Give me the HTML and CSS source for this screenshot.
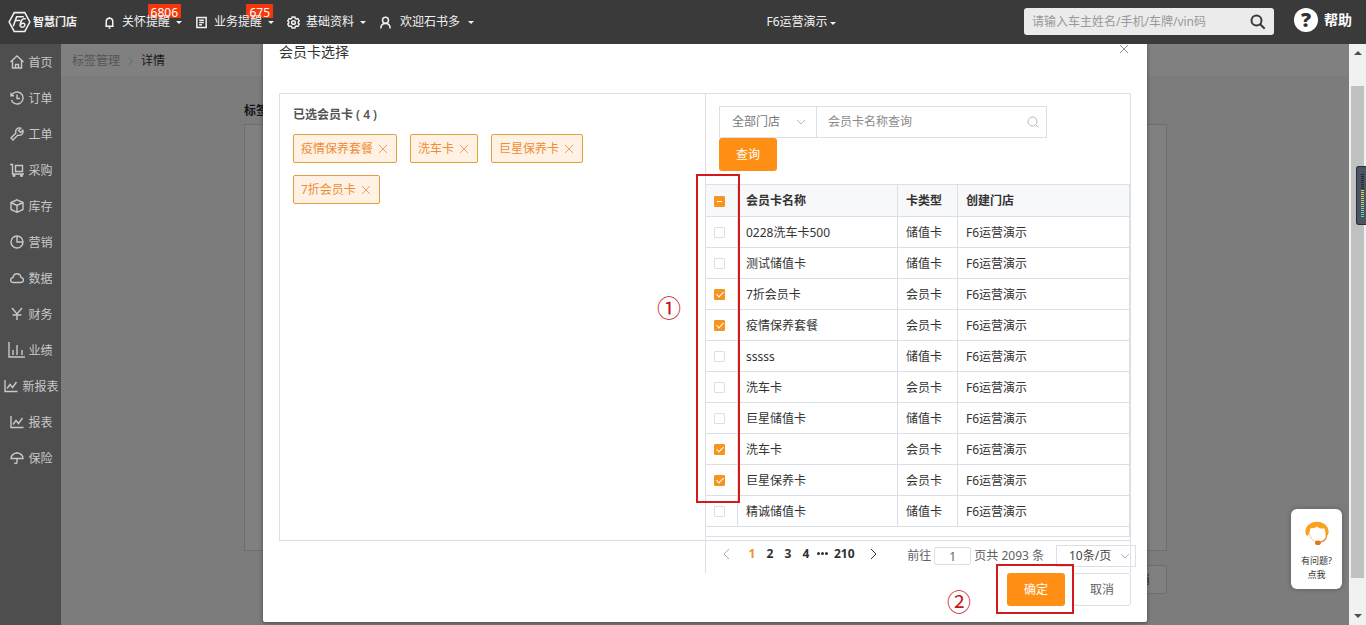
FILE: index.html
```html
<!DOCTYPE html>
<html lang="zh-CN">
<head>
<meta charset="utf-8">
<title>智慧门店</title>
<link rel="stylesheet" href="styles.css">
</head>
<body>
<div class="app">
  <header class="topbar">
    <div class="logo">
      <svg class="logo-mark" viewBox="0 0 24 22" fill="none" stroke="currentColor" stroke-width="1.6"><path d="M6.500 1.200h11L22.800 11l-5.300 9.800h-11L1.200 11z"/><path d="M5.500 15.500L9 5.500h7.500M8 9.500h5M18.500 7.500h-2c-2 0-3 3-3.800 6-.7 3.500 4 4 4.800 1 .600-2.600-2.800-3-4.200-.8"/></svg>
      <strong class="logo-text">智慧门店</strong>
    </div>
    <nav class="topnav">
      <button class="nav-item" type="button"><svg class="nav-icon" viewBox="0 0 14 14"><path d="M3.500 11V6a3.500 3.500 0 0 1 7 0v5M2.500 11h9M6 13h2M7 1v1.500"/></svg><span class="nav-label">关怀提醒<span class="badge">6806</span></span><i class="caret"></i></button>
      <button class="nav-item" type="button"><svg class="nav-icon" viewBox="0 0 14 14"><path d="M2 1.500h10v11H2zM4.500 4.500h5M4.500 7h5M4.500 9.500h3"/></svg><span class="nav-label">业务提醒<span class="badge">675</span></span><i class="caret"></i></button>
      <button class="nav-item" type="button"><svg class="nav-icon" viewBox="0 0 14 14"><path d="M5.500 1h3l.5 1.600 1 .600 1.700-.400 1.500 2.500L12 6.500v1l1.200 1.200-1.500 2.500-1.700-.400-1 .600-.5 1.600h-3L5 11.400l-1-.600-1.700.400L.8 8.700 2 7.500v-1L.8 5.300l1.500-2.500 1.700.400 1-.600z"/><circle cx="7" cy="7" r="2"/></svg><span class="nav-label">基础资料</span><i class="caret"></i></button>
      <button class="nav-item nav-user" type="button"><svg class="nav-icon" viewBox="0 0 14 14"><circle cx="7" cy="4.500" r="3.200"/><path d="M2 13.500c0-3.500 2-5.500 5-5.500s5 2 5 5.500"/></svg><span class="nav-label">欢迎石书多</span><i class="caret"></i></button>
    </nav>
    <button class="shop-switch" type="button">F6运营演示<i class="caret"></i></button>
    <div class="topbar-right">
      <label class="search"><input type="text" aria-label="搜索" placeholder="请输入车主姓名/手机/车牌/vin码"><svg class="search-icon" viewBox="0 0 16 16"><circle cx="6.500" cy="6.500" r="5"/><path d="M10.200 10.200l4.500 4.500"/></svg></label>
      <a class="help" href="#"><span class="help-mark">?</span>帮助</a>
    </div>
  </header>

  <div class="workspace">
    <nav class="sidebar">
      <a href="#"><svg viewBox="0 0 14 14"><path d="M.5 7L7 1l6.500 6M2.500 5.500V13h9V5.500M5.500 13V9.500h3V13"/></svg>首页</a>
      <a href="#"><svg viewBox="0 0 14 14"><path d="M1.600 4.500A6 6 0 1 1 1.400 9M1 1.800v3h3M7 3.500V7.500h3"/></svg>订单</a>
      <a href="#"><svg viewBox="0 0 14 14"><path d="M12.800 3.200l-2.300 2.300-2-2 2.300-2.300a3.800 3.800 0 0 0-4.900 4.900L1 11l2 2 4.900-4.900a3.800 3.800 0 0 0 4.900-4.900z"/></svg>工单</a>
      <a href="#"><svg viewBox="0 0 14 14"><path d="M0 1.500h2.500V11H14M5.500 2.500h7v6h-7z"/><circle cx="4" cy="12.500" r=".8"/><circle cx="11.500" cy="12.500" r=".8"/></svg>采购</a>
      <a href="#"><svg viewBox="0 0 14 14"><path d="M7 .8l6 2.700v7L7 13.300 1 10.500v-7zM1 3.500L7 6.500l6-3M7 6.500v6.800"/></svg>库存</a>
      <a href="#"><svg viewBox="0 0 14 14"><circle cx="7" cy="7" r="6"/><path d="M7 1v6h6"/></svg>营销</a>
      <a href="#"><svg viewBox="0 0 14 14"><path d="M3.500 11.500C-.3 11.500-.3 7 3 6.500 4 1.500 10 1.500 11 6.500c3.400.5 3.400 5-.5 5z"/></svg>数据</a>
      <a href="#"><svg viewBox="0 0 14 14"><path d="M2 1l5 6 5-6M2.500 8h9M7 7v6"/></svg>财务</a>
      <a class="perf" href="#"><svg class="wide" viewBox="0 0 17 16"><path d="M1 0v15h16M5 13V8M9 13V3M14 13V8"/></svg>业绩</a>
      <a href="#"><svg viewBox="0 0 14 14"><path d="M1 1v11.500h12.500M3 9.500l3-4 2.500 3L12.500 3"/></svg>新报表</a>
      <a href="#"><svg viewBox="0 0 14 14"><path d="M1 1v11.500h12.500M3 9.500l3-4 2.500 3L12.500 3"/></svg>报表</a>
      <a href="#"><svg viewBox="0 0 14 14"><path d="M1 7.500a6 5.500 0 0 1 12 0zM7 1v1M7 7.500v4c0 1.500-2.500 1.500-2.500 0"/></svg>保险</a>
    </nav>

    <main class="page">
      <div class="crumbs"><a href="#">标签管理</a><svg viewBox="0 0 8 12"><path d="M2 2l4 4-4 4"/></svg><span>详情</span></div>
      <div class="detail">
        <h2>标签</h2>
        <div class="detail-card"></div>
        <div class="detail-actions"><button type="button">取消</button></div>
      </div>

      <section class="modal" role="dialog" aria-labelledby="dialog-title">
        <div class="modal-head">
          <h1 id="dialog-title">会员卡选择</h1>
          <button class="close" type="button" aria-label="关闭"><svg viewBox="0 0 10 10"><path d="M1 1l8 8M9 1L1 9"/></svg></button>
        </div>
        <div class="picker">
          <div class="chosen">
            <h3>已选会员卡 ( 4 )</h3>
            <div class="tags">
              <span class="tag">疫情保养套餐<button type="button" aria-label="移除"><svg viewBox="0 0 10 10"><path d="M1 1l8 8M9 1L1 9"/></svg></button></span>
              <span class="tag">洗车卡<button type="button" aria-label="移除"><svg viewBox="0 0 10 10"><path d="M1 1l8 8M9 1L1 9"/></svg></button></span>
              <span class="tag">巨星保养卡<button type="button" aria-label="移除"><svg viewBox="0 0 10 10"><path d="M1 1l8 8M9 1L1 9"/></svg></button></span>
              <span class="tag">7折会员卡<button type="button" aria-label="移除"><svg viewBox="0 0 10 10"><path d="M1 1l8 8M9 1L1 9"/></svg></button></span>
            </div>
          </div>
          <div class="cards">
            <form class="filter">
              <div class="filter-row">
                <label class="select-box store"><select aria-label="门店"><option>全部门店</option></select><svg class="chevron" viewBox="0 0 10 6"><path d="M1 1l4 4 4-4"/></svg></label>
                <label class="query"><input type="text" aria-label="会员卡名称" placeholder="会员卡名称查询"><svg viewBox="0 0 12 12"><circle cx="5.500" cy="5.500" r="4.500"/><path d="M9 9l2.500 2.500"/></svg></label>
              </div>
              <button class="primary" type="button">查询</button>
            </form>
            <div class="table-wrap">
              <table>
                <colgroup><col class="c-check"><col class="c-name"><col class="c-type"><col></colgroup>
                <thead><tr><th><input class="partial" type="checkbox" aria-label="全选"></th><th>会员卡名称</th><th>卡类型</th><th>创建门店</th></tr></thead>
                <tbody>
                  <tr><td><input type="checkbox" aria-label="选择"></td><td>0228洗车卡500</td><td>储值卡</td><td>F6运营演示</td></tr>
                  <tr><td><input type="checkbox" aria-label="选择"></td><td>测试储值卡</td><td>储值卡</td><td>F6运营演示</td></tr>
                  <tr><td><input type="checkbox" aria-label="选择" checked></td><td>7折会员卡</td><td>会员卡</td><td>F6运营演示</td></tr>
                  <tr><td><input type="checkbox" aria-label="选择" checked></td><td>疫情保养套餐</td><td>会员卡</td><td>F6运营演示</td></tr>
                  <tr><td><input type="checkbox" aria-label="选择"></td><td>sssss</td><td>储值卡</td><td>F6运营演示</td></tr>
                  <tr><td><input type="checkbox" aria-label="选择"></td><td>洗车卡</td><td>会员卡</td><td>F6运营演示</td></tr>
                  <tr><td><input type="checkbox" aria-label="选择"></td><td>巨星储值卡</td><td>储值卡</td><td>F6运营演示</td></tr>
                  <tr><td><input type="checkbox" aria-label="选择" checked></td><td>洗车卡</td><td>会员卡</td><td>F6运营演示</td></tr>
                  <tr><td><input type="checkbox" aria-label="选择" checked></td><td>巨星保养卡</td><td>会员卡</td><td>F6运营演示</td></tr>
                  <tr><td><input type="checkbox" aria-label="选择"></td><td>精诚储值卡</td><td>储值卡</td><td>F6运营演示</td></tr>
                </tbody>
              </table>
            </div>
            <div class="pager">
              <div class="pages">
                <button class="prev" type="button" aria-label="上一页"><svg viewBox="0 0 8 12"><path d="M6 1L1 6l5 5"/></svg></button>
                <button class="current" type="button">1</button><button type="button">2</button><button type="button">3</button><button type="button">4</button><span class="dots"><i></i><i></i><i></i></span><button class="last" type="button">210</button>
                <button class="next" type="button" aria-label="下一页"><svg viewBox="0 0 8 12"><path d="M2 1l5 5-5 5"/></svg></button>
              </div>
              <label class="jump">前往<input type="text" value="1">页共 2093 条</label>
              <label class="select-box size"><select aria-label="每页条数"><option>10条/页</option></select><svg class="chevron" viewBox="0 0 10 6"><path d="M1 1l4 4 4-4"/></svg></label>
            </div>
          </div>
        </div>
        <div class="modal-foot">
          <button class="primary" type="button">确定</button>
          <button class="plain" type="button">取消</button>
        </div>
        <div class="mark mark-checks"></div>
        <div class="mark mark-confirm"></div>
        <span class="step step-one">①</span>
        <span class="step step-two">②</span>
      </section>

      <a class="service" href="#">
        <svg viewBox="0 0 28 28"><path d="M3 17C-1 12 3 2 14 2s15 10 11 15c-2 0-2-5-3-8-4 1-7-1-8-2-2 2-5 2-7 2-1 3-1 8-4 8z" fill="#f9a11f"/><path d="M24 15c1 5-2 8-7 9" fill="none" stroke="#f0902a" stroke-width="1.500"/><path d="M6 15c1 5 3 7 7 8" fill="none" stroke="#f9c27a"/><ellipse cx="15" cy="24.500" rx="3.200" ry="2.500" fill="#e8731c"/></svg>
        <span>有问题?</span><span>点我</span>
      </a>
    </main>

    <div class="scroller" aria-hidden="true"><i class="arrow-up"></i><div class="thumb"></div><i class="arrow-down"></i>
      <div class="meter"><div class="meter-bars"></div></div>
    </div>
  </div>
</div>
</body>
</html>
```

FILE: styles.css
```css
* { box-sizing: border-box; }
body { margin: 0; font: 12px/16px "Noto Sans", "Noto Sans CJK SC", sans-serif; color: #333; }
button, input, select { font: inherit; color: inherit; margin: 0; padding: 0; border: 0; background: none; outline: 0; }
a { color: inherit; text-decoration: none; }
h1, h2, h3 { margin: 0; font-size: 12px; }
svg { flex: none; fill: none; stroke: currentColor; }

.app { height: 100vh; display: flex; flex-direction: column; overflow: hidden; }

.topbar { flex: none; height: 44px; display: flex; align-items: center; padding: 0 14px 0 8px; background: #3a3a3a; color: #f2f2f2; position: relative; }
.logo { display: flex; align-items: center; gap: 2px; }
.logo-mark { width: 23px; height: 22px; }
.logo-text { font-size: 11px; }
.topnav { display: flex; gap: 13px; margin-left: 26px; }
.nav-item { display: flex; align-items: center; gap: 6px; }
.nav-user { gap: 8px; }
.nav-icon { width: 13px; height: 13px; stroke-width: 1.6; }
.nav-label { position: relative; z-index: 0; }
.badge { position: absolute; right: -11px; top: -10px; height: 14px; padding: 0 3px; border-radius: 1px; background: #f5380c; color: #fff; line-height: 17px; z-index: -1; }
.caret { display: inline-block; border: 3px solid transparent; border-top-color: currentColor; border-bottom: 0; }
.shop-switch { position: absolute; left: 0; right: 0; width: fit-content; margin: 0 auto; padding-left: 236px; display: flex; align-items: center; gap: 2px; }
.shop-switch .caret { margin-top: 3px; }
.topbar-right { margin-left: auto; display: flex; align-items: center; gap: 20px; margin-bottom: 4px; }
.search { width: 250px; height: 27px; margin-top: 3px; display: flex; align-items: center; padding: 0 8px; border-radius: 3px; background: #ebebeb; color: #3a3a3a; }
.search input { flex: 1; min-width: 0; }
.search input::placeholder { color: #999; }
.search-icon { width: 16px; height: 16px; stroke-width: 2; }
.help { display: flex; align-items: center; gap: 6px; font-size: 14px; font-weight: bold; color: #fff; }
.help-mark { width: 24px; height: 24px; border-radius: 50%; background: #fff; color: #333; font-size: 20px; font-weight: 900; line-height: 24px; text-align: center; }

.workspace { flex: 1; min-height: 0; display: flex; }
.sidebar { flex: none; width: 61px; background: #4e4e4e; color: #c8c8c8; padding: 1px 0 0 2px; }
.sidebar a { height: 36px; display: flex; align-items: center; justify-content: center; gap: 4px; white-space: nowrap; }
.sidebar svg { width: 14px; height: 14px; stroke-width: 1.4; margin-bottom: 2px; }
.sidebar .wide { width: 17px; height: 16px; }
.sidebar .perf { gap: 3px; padding-right: 2px; }

.page { flex: 1; min-width: 0; position: relative; background: #7c7c7c; overflow: hidden; }
.crumbs { height: 33px; display: flex; align-items: center; gap: 6px; padding: 2px 11px 0; background: #808080; border-bottom: 1px solid #7a7a7a; color: #555; }
.crumbs svg { width: 9px; height: 12px; stroke: #60696f; }
.crumbs span { color: #151515; }
.detail { width: 924px; max-width: 100%; margin: 26px auto 0; padding-left: 1px; }
.detail h2 { color: #151515; }
.detail-card { height: 427px; margin-top: 5px; border: 1px solid #6e6e6e; background: #808080; }
.detail-actions { display: flex; justify-content: flex-end; margin-top: 14px; }
.detail-actions button { width: 58px; height: 29px; border: 1px solid #6e6e6e; border-radius: 3px; background: #808080; color: #333; }

.modal { position: absolute; top: 0; left: 0; right: 0; width: 884px; max-width: 100%; margin: 0 auto; padding: 0 16px 16px; background: #fff; border-radius: 0 0 2px 2px; box-shadow: 0 1px 4px #0006; }
.modal-head { height: 49px; display: flex; align-items: flex-start; justify-content: space-between; }
.modal-head h1 { font-size: 14px; line-height: 16px; font-weight: normal; }
.close { width: 12px; height: 10px; display: flex; color: #909399; }
.close svg, .tag svg { width: 10px; height: 10px; }

.picker { display: grid; grid-template-columns: 1fr 1fr; height: 448px; border: 1px solid #dcdfe6; }
.chosen { padding: 13px; }
.chosen h3 { color: #555; font-weight: 600; line-height: 16px; }
.tags { display: flex; flex-wrap: wrap; gap: 12px 13px; margin-top: 11px; max-width: 320px; }
.tag { height: 29px; display: flex; align-items: center; gap: 5px; padding: 0 8px 0 7px; border: 1px solid #dca23e; border-radius: 2px; background: #fff2e5; color: #ee8d35; }
.tag button { display: flex; color: #eda06a; }

.cards { height: 479px; border-left: 1px solid #dcdfe6; border-right: 1px solid #dcdfe6; margin-right: -1px; display: flex; flex-direction: column; }
.filter { padding: 12px 13px 13px; }
.filter-row { display: flex; width: 328px; max-width: 100%; }
.select-box { position: relative; display: flex; align-items: center; border: 1px solid #dcdfe6; }
.select-box select { appearance: none; width: 100%; height: 100%; padding-left: 12px; }
.chevron { position: absolute; right: 10px; width: 10px; height: 6px; stroke: #b4b8bf; }
.store { width: 98px; height: 32px; color: #777; }
.query { flex: 1; height: 32px; display: flex; align-items: center; padding: 0 7px 0 11px; border: 1px solid #dcdfe6; border-left: 0; }
.query input { flex: 1; min-width: 0; }
.query input::placeholder { color: #8b8b8b; }
.query svg { width: 12px; height: 12px; stroke: #b4b8bf; }
.primary { display: block; width: 58px; height: 33px; border-radius: 3px; background: #ff9015; color: #fff; }

.table-wrap { border: 1px solid #dcdfe6; border-left: 0; padding-bottom: 9px; }
table { width: 100%; table-layout: fixed; border-collapse: separate; border-spacing: 0; }
.c-check { width: 32px; }
.c-name { width: 160px; }
.c-type { width: 60px; }
th, td { height: 31px; padding: 1px 8px 0; border: 0 solid #dcdfe6; border-width: 0 1px 1px 0; text-align: left; white-space: nowrap; }
th { height: 32px; background: #f7f8fa; font-weight: bold; }
th:last-child, td:last-child { border-right: 0; }
table input { appearance: none; display: block; position: relative; width: 11px; height: 11px; border: 1px solid #dcdfe6; border-radius: 1px; background: #fff; }
table input:checked, table .partial { border-color: #f7941d; background: #f7941d; }
table input:checked::after { content: ""; position: absolute; left: 3px; top: 0; width: 3px; height: 6px; border: solid #fff; border-width: 0 1px 1px 0; transform: rotate(45deg); }
table .partial::after { content: ""; position: absolute; left: 2px; top: 4px; width: 5px; height: 1px; background: #fff; }

.pager { display: flex; align-items: center; margin: 8px -6px 0 17px; white-space: nowrap; color: #606266; }
.pages { display: flex; align-items: center; font-weight: bold; color: #303133; margin-bottom: 5px; }
.pages button { min-width: 18px; text-align: center; }
.pages .current { color: #ee9228; }
.pages svg { display: block; width: 8px; height: 12px; }
.pages .prev { color: #aaa; padding-right: 12px; }
.pages .next { padding-left: 14px; }
.pages .last { padding: 0 0 0 4px; }
.dots { display: flex; gap: 1px; padding: 0 2px; }
.dots i { width: 3px; height: 3px; border-radius: 50%; background: #303133; }
.jump { display: flex; align-items: center; gap: 3px; margin-left: auto; }
.jump input { width: 37px; height: 18px; border: 1px solid #dcdfe6; border-radius: 2px; text-align: center; }
.size { width: 80px; height: 22px; margin-left: 12px; color: #444; }
.size .chevron { right: 5px; }

.modal-foot { display: flex; justify-content: flex-end; gap: 8px; margin-top: 32px; }
.plain { width: 58px; height: 33px; border: 1px solid #dcdfe6; border-radius: 3px; color: #606266; }

.mark { position: absolute; border: 2px solid #d3191c; pointer-events: none; }
.mark-checks { left: 433px; top: 130px; width: 44px; height: 329px; }
.mark-confirm { right: 73px; bottom: 8px; width: 78px; height: 50px; }
.step { position: absolute; font-size: 24px; line-height: 24px; color: #c9161d; }
.step-one { left: 394px; top: 252px; }
.step-two { right: 176px; bottom: 8px; }

.service { position: absolute; right: 7px; bottom: 36px; width: 51px; height: 80px; padding-top: 11px; display: flex; flex-direction: column; align-items: center; border-radius: 6px; background: #fff; box-shadow: 0 0 5px #0004; font-size: 9px; line-height: 14px; }
.service svg { width: 26px; height: 26px; margin-bottom: 8px; stroke: none; }

.scroller { position: relative; flex: none; width: 17px; padding: 7px 2px; display: flex; flex-direction: column; align-items: center; background: #f1f1f1; }
.thumb { width: 13px; flex: 1; margin: 31px 0 36px; background: #c1c1c1; }
.arrow-up, .arrow-down { border: 4px solid transparent; }
.arrow-up { border-top: 0; border-bottom-color: #505050; }
.arrow-down { border-bottom: 0; border-top-color: #505050; }
.meter { position: absolute; right: 0; top: 122px; width: 10px; height: 59px; padding: 7px 2px 6px 4px; border: 1px solid #252d38; border-right: 0; border-radius: 3px 0 0 3px; background: #4c5361; }
.meter-bars { height: 100%; background: repeating-linear-gradient(#0000 0 1px, #4c5361 1px 2px), linear-gradient(#20242c 34%, #d8cf62 34%, #b9d87a 65%, #55d0bd 90%); }
```
